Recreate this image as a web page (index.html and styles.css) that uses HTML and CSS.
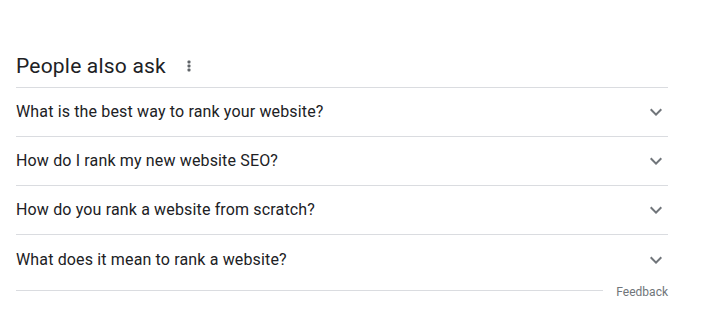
FILE: index.html
```html
<!DOCTYPE html>
<html>
<head>
<meta charset="utf-8">
<link rel="stylesheet" href="styles.css">
</head>
<body>
<div class="paa">
  <div class="paa-head">
    <h2 class="paa-title">People also ask</h2>
    <span class="kebab" aria-label="More options">
      <svg width="4" height="12" viewBox="0 0 4 12"><rect x="0.5" y="0.5" width="3" height="3" rx="1"/><rect x="0.5" y="4.5" width="3" height="3" rx="1"/><rect x="0.5" y="8.5" width="3" height="3" rx="1"/></svg>
    </span>
  </div>
  <div class="paa-list">
    <div class="q-row"><span class="q-text">What is the best way to rank your website?</span><svg class="chev" width="24" height="24" viewBox="0 0 24 24"><path d="M7.41 8.59 12 13.17l4.59-4.58L18 10l-6 6-6-6z"/></svg></div>
    <div class="q-row"><span class="q-text">How do I rank my new website SEO?</span><svg class="chev" width="24" height="24" viewBox="0 0 24 24"><path d="M7.41 8.59 12 13.17l4.59-4.58L18 10l-6 6-6-6z"/></svg></div>
    <div class="q-row"><span class="q-text">How do you rank a website from scratch?</span><svg class="chev" width="24" height="24" viewBox="0 0 24 24"><path d="M7.41 8.59 12 13.17l4.59-4.58L18 10l-6 6-6-6z"/></svg></div>
    <div class="q-row last"><span class="q-text">What does it mean to rank a website?</span><svg class="chev" width="24" height="24" viewBox="0 0 24 24"><path d="M7.41 8.59 12 13.17l4.59-4.58L18 10l-6 6-6-6z"/></svg></div>
  </div>
  <div class="paa-foot">
    <div class="foot-line"></div>
    <span class="feedback">Feedback</span>
  </div>
</div>
</body>
</html>
```
FILE: styles.css
```css
html, body {
  margin: 0;
  padding: 0;
  background: #fff;
}
body {
  font-family: Roboto, "Noto Sans", Arial, sans-serif;
  color: #202124;
}
.paa {
  width: 652px;
  margin-left: 16px;
  padding-top: 51px;
}
.paa-head {
  display: flex;
  align-items: center;
  box-sizing: border-box;
  height: 36px;
  padding-bottom: 6px;
}
.paa-title {
  margin: 0;
  font-size: 21px;
  font-weight: 400;
  letter-spacing: 0.2px;
  line-height: 28px;
  color: #202124;
}
.kebab {
  display: flex;
  padding-left: 21px;
  margin-top: -1px;
  fill: #5f6368;
}
.paa-list {
  border-top: 1px solid #dadce0;
}
.q-row {
  display: flex;
  align-items: center;
  justify-content: space-between;
  height: 48px;
  border-bottom: 1px solid #dadce0;
}
.q-row.last {
  border-bottom: none;
  height: 49px;
}
.q-text {
  font-size: 16px;
  letter-spacing: 0.15px;
  line-height: 24px;
  color: #202124;
}
.chev {
  fill: #70757a;
}
.paa-foot {
  display: flex;
  align-items: center;
  height: 14px;
}
.foot-line {
  flex: 1;
  height: 1px;
  background: #dadce0;
  margin-top: -1px;
  margin-right: 13px;
}
.feedback {
  font-size: 12px;
  line-height: 14px;
  padding-top: 2px;
  color: #70757a;
}
```
